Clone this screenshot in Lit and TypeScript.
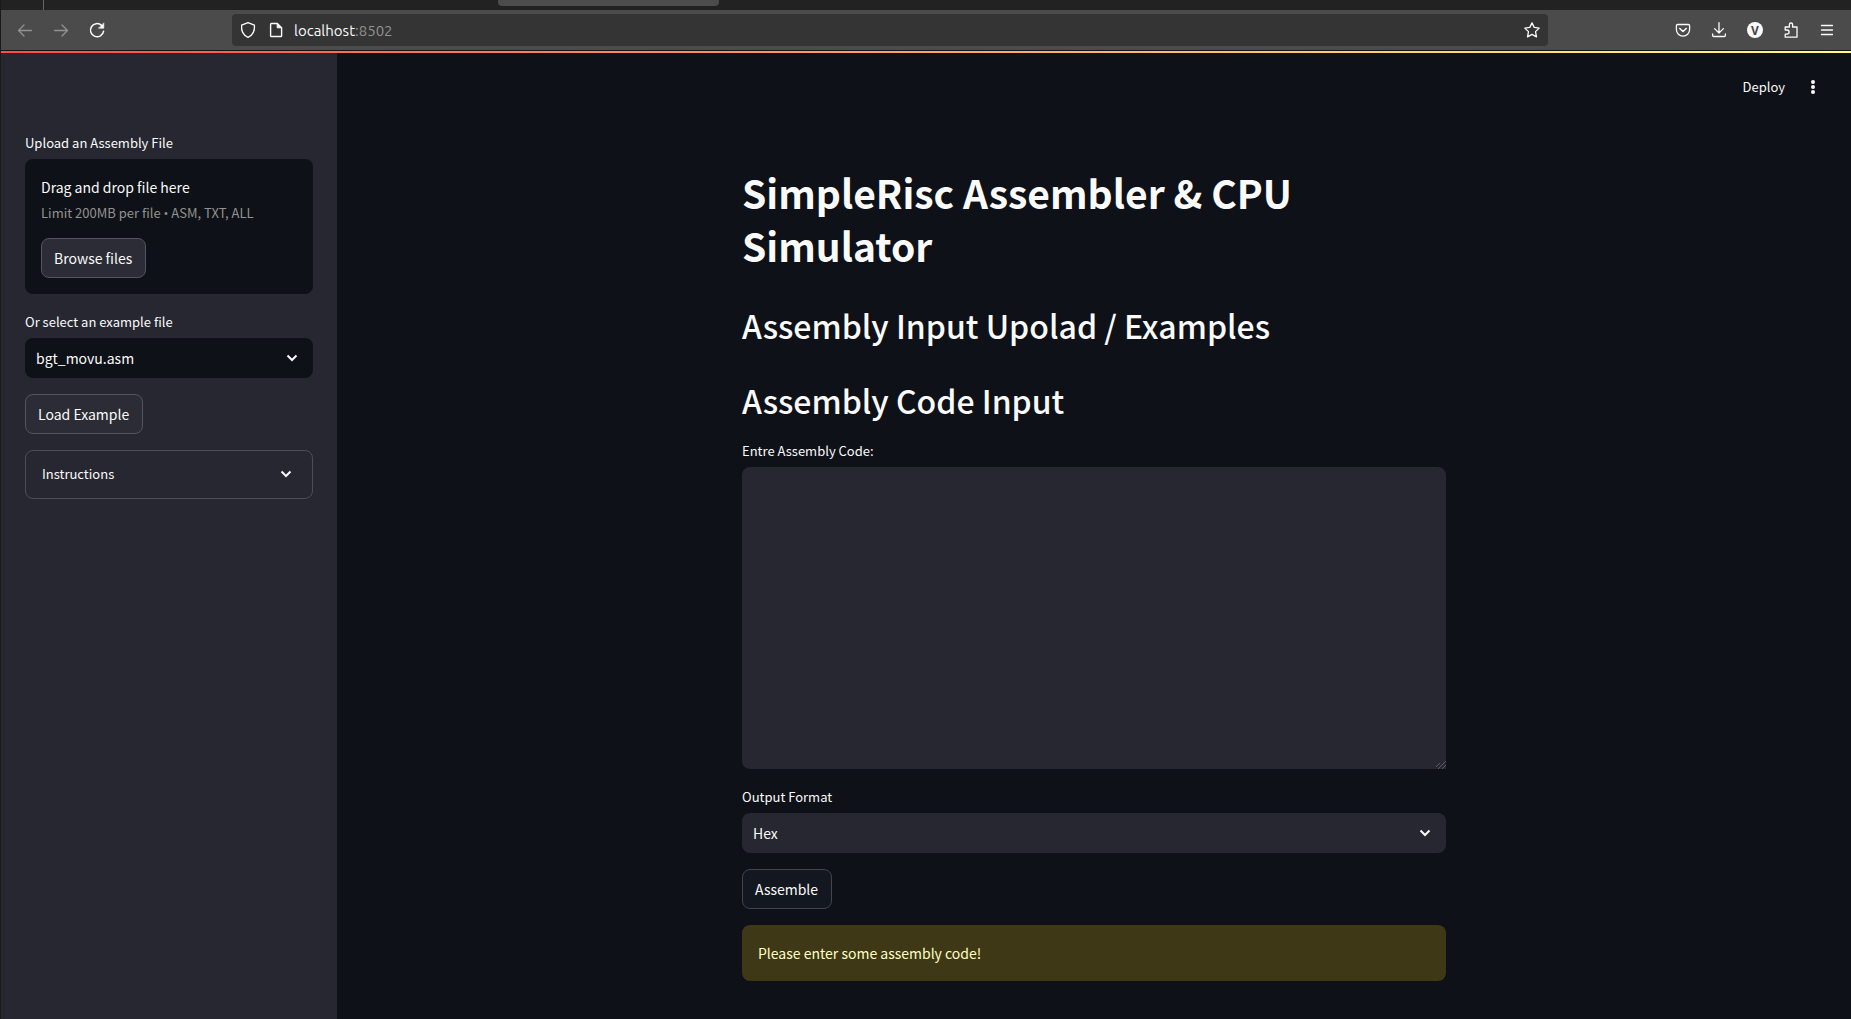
import { LitElement, html, css, svg } from "lit";
import { customElement, property } from "lit/decorators.js";

const chevron = svg`<path d="M1.5 1.5 L6 6 L10.5 1.5" fill="none" stroke="currentColor" stroke-width="2"/>`;

@customElement("browser-bar")
class BrowserBar extends LitElement {
  static styles = css`
    :host { display: block; font-family: "Ubuntu", "Noto Sans", sans-serif; }
    .tabs { height: 10px; background: #222; display: flex; align-items: flex-start; }
    .divider { width: 1px; height: 10px; margin-left: 42px; background: #666; }
    .tab { width: 221px; height: 6px; margin-left: 454px; background: #4c4c4c; border-radius: 0 0 4px 4px; }
    .toolbar {
      display: flex; align-items: center; height: 40px; padding: 0 14px;
      background: #4b4b4b; border-bottom: 1px solid #151515;
    }
    .nav { display: flex; gap: 16px; width: 217px; }
    .tools { display: flex; gap: 16px; margin-left: 125px; }
    button { display: flex; padding: 0; border: 0; background: none; color: #fbfbfe; }
    button:disabled { color: #929292; }
    svg { display: block; width: 20px; height: 20px; fill: none; stroke: currentColor; stroke-width: 1.3; stroke-linecap: round; stroke-linejoin: round; }
    .url {
      display: flex; align-items: center; gap: 8px; flex: 1; height: 32px; padding: 0 6px;
      box-sizing: border-box; background: #343434; border-radius: 4px; color: #fbfbfe;
    }
    .address { flex: 1; padding-top: 2px; font-size: 15px; line-height: 20px; color: #fbfbfe; }
    .port { color: #929292; }
    .badge { fill: #fbfbfe; stroke: none; }
    .badge text { fill: #444; font: bold 12px "Noto Sans", sans-serif; text-anchor: middle; }
  `;

  render() {
    return html`
      <div class="tabs"><span class="divider"></span><span class="tab"></span></div>
      <div class="toolbar">
        <div class="nav">
          <button disabled aria-label="Back"><svg viewBox="0 0 20 20"><path d="M16.5 10.5H3.5M9 5L3.5 10.5L9 16"/></svg></button>
          <button disabled aria-label="Forward"><svg viewBox="0 0 20 20"><path d="M3.5 10.5H16.5M11 5L16.5 10.5L11 16"/></svg></button>
          <button aria-label="Reload"><svg viewBox="0 0 20 20"><path d="M16.6 11.2A6.6 6.6 0 1 1 14.6 5.4" stroke-width="1.5"/><path d="M16.8 3.2V8.2H11.8Z" fill="currentColor" stroke-width=".6"/></svg></button>
        </div>
        <div class="url">
          <button aria-label="Tracking protection"><svg viewBox="0 0 20 20"><path d="M10 2.7L16.4 5.2C16.9 10.7 15 15 10 17.4C5 15 3.1 10.7 3.6 5.2Z"/></svg></button>
          <button aria-label="Site information"><svg viewBox="0 0 20 20"><path d="M5.4 3.5H11.3L15.6 7.8V15.7Q15.6 16.5 14.8 16.5H5.4Q4.6 16.5 4.6 15.7V4.3Q4.6 3.5 5.4 3.5Z" stroke-width="1.4"/><path d="M11.2 3.6V7.8H15.4Z" fill="currentColor" stroke-width="1"/></svg></button>
          <span class="address">localhost<span class="port">:8502</span></span>
          <button aria-label="Bookmark this page"><svg viewBox="0 0 20 20"><path d="M10 2.9L12.2 7.4L17.2 8.1L13.5 11.6L14.5 16.9L10 14.4L5.5 16.9L6.5 11.6L2.8 8.1L7.8 7.4Z"/></svg></button>
        </div>
        <div class="tools">
          <button aria-label="Save to Pocket"><svg viewBox="0 0 20 20"><path d="M4.6 4.5H15.4Q16.6 4.5 16.6 5.7V9.6A6.6 6.6 0 0 1 3.4 9.6V5.7Q3.4 4.5 4.6 4.5Z"/><path d="M6.8 8.5L10 11.5L13.2 8.5" stroke-width="1.6"/></svg></button>
          <button aria-label="Downloads"><svg viewBox="0 0 20 20"><path d="M10 2.6V12.8M5.6 8.6L10 13L14.4 8.6M3.6 13.8V15.3Q3.6 16.5 4.8 16.5H15.2Q16.4 16.5 16.4 15.3V13.8"/></svg></button>
          <button aria-label="Account"><svg class="badge" viewBox="0 0 20 20"><circle cx="10" cy="10" r="8"/><text x="10" y="14.5">V</text></svg></button>
          <button aria-label="Extensions"><svg viewBox="0 0 20 20"><path d="M4.2 9.4V7H8.4V4.6A1.6 1.6 0 0 1 11.6 4.6V7H16V17.2H4.2V14.2H6A1.8 1.8 0 0 0 6 10H4.2Z"/></svg></button>
          <button aria-label="Application menu"><svg viewBox="0 0 20 20"><path d="M4.5 5.5H15.5M4.5 10H15.5M4.5 14.5H15.5"/></svg></button>
        </div>
      </div>`;
  }
}

@customElement("select-field")
class SelectField extends LitElement {
  @property() label = "";
  @property() value = "";

  static styles = css`
    :host { display: flex; flex-direction: column; gap: 4px; color: #fafafa; }
    label { font-size: 13px; line-height: 24px; }
    .box { display: grid; align-items: center; border-radius: 8px; background: var(--field, #262730); }
    select {
      grid-area: 1 / 1; width: 100%; height: 40px; padding: 0 40px 0 11px; border: 0; border-radius: 8px;
      appearance: none; background: none; color: inherit; font: inherit; font-size: 14px;
    }
    svg { grid-area: 1 / 1; justify-self: end; width: 12px; height: 8px; margin-right: 15px; pointer-events: none; }
  `;

  render() {
    return html`
      <label for="field">${this.label}</label>
      <div class="box">
        <select id="field"><option>${this.value}</option></select>
        <svg viewBox="0 0 12 8">${chevron}</svg>
      </div>`;
  }
}

@customElement("app-root")
class AppRoot extends LitElement {
  static styles = css`
    :host {
      display: flex; flex-direction: column; min-height: 100vh; box-sizing: border-box;
      border-left: 1px solid #1a1a1a; background: #0e1117; color: #fafafa;
      font-family: "Noto Sans CJK SC", sans-serif; font-size: 14px; line-height: 24px;
    }
    .rainbow { height: 2px; background: linear-gradient(90deg, #ff4b4b, #fffd80); }
    .body { display: flex; flex: 1; }
    .sidebar {
      display: flex; flex-direction: column; align-items: stretch; gap: 16px;
      width: 336px; box-sizing: border-box; padding: 78px 24px 24px; background: #262730;
    }
    .group { display: flex; flex-direction: column; gap: 4px; }
    .label { font-size: 13px; line-height: 24px; }
    .drop {
      display: flex; flex-direction: column; align-items: flex-start; padding: 16px;
      border-radius: 8px; background: #0e1117;
    }
    .hint { margin-bottom: 11px; font-size: 13px; line-height: 28px; color: #92938f; }
    .bullet { font-family: "Open Sans", sans-serif; }
    button { font: inherit; color: inherit; }
    .btn {
      align-self: flex-start; height: 40px; padding: 0 13px 0 12px; border: 1px solid #53545d;
      border-radius: 8px; background: #2b2c36;
    }
    .assemble { border-color: #41444c; background: #131720; }
    .dark { --field: #0e1117; }
    details { border: 1px solid #4c4d56; border-radius: 8px; }
    summary {
      display: flex; align-items: center; justify-content: space-between; height: 47px;
      box-sizing: border-box; padding: 0 20px 2px 16px; font-size: 13px; list-style: none;
    }
    summary svg { width: 12px; height: 8px; }
    .main { display: flex; flex-direction: column; flex: 1; min-width: 0; }
    .header {
      display: flex; justify-content: flex-end; align-items: center; gap: 20px;
      height: 68px; padding-right: 30px;
    }
    .header button { padding: 0; border: 0; background: none; font-size: 13px; }
    .header svg { display: block; width: 16px; height: 16px; fill: #fafafa; }
    .content {
      display: flex; flex-direction: column; align-items: stretch; gap: 16px;
      width: 100%; max-width: 704px; margin: 0 auto; padding: 45px 0 36px;
    }
    h1, h2 { margin: 0; }
    h1 { padding-bottom: 16px; font-size: 39px; line-height: 53px; font-weight: 700; }
    h2 { padding-bottom: 16px; font-size: 32px; line-height: 43px; font-weight: 500; }
    h2:last-of-type { padding-bottom: 1px; }
    textarea {
      display: block; width: 100%; height: 302px; box-sizing: border-box; padding: 16px; border: 0;
      border-radius: 8px; background: #262730; color: #fafafa; font: inherit; resize: vertical;
    }
    textarea::-webkit-resizer {
      background:
        linear-gradient(135deg, #262730 60%, transparent 60%),
        repeating-linear-gradient(135deg, #5c5c60 0 1px, #262730 1px 3px);
    }
    .alert { padding: 16px; border-radius: 8px; background: #3e3816; color: #ffffc2; }
  `;

  render() {
    return html`
      <browser-bar></browser-bar>
      <div class="rainbow"></div>
      <div class="body">
        <aside class="sidebar">
          <div class="group">
            <span class="label" id="upload-label">Upload an Assembly File</span>
            <section class="drop" aria-labelledby="upload-label">
              <span>Drag and drop file here</span>
              <span class="hint">Limit 200MB per file <span class="bullet">•</span> ASM, TXT, ALL</span>
              <button class="btn">Browse files</button>
            </section>
          </div>
          <select-field class="dark" label="Or select an example file" value="bgt_movu.asm"></select-field>
          <button class="btn">Load Example</button>
          <details>
            <summary>Instructions <svg viewBox="0 0 12 8">${chevron}</svg></summary>
          </details>
        </aside>
        <div class="main">
          <header class="header">
            <button>Deploy</button>
            <button aria-label="Main menu">
              <svg viewBox="0 0 16 16"><circle cx="8" cy="3" r="2"/><circle cx="8" cy="8" r="2"/><circle cx="8" cy="13" r="2"/></svg>
            </button>
          </header>
          <main class="content">
            <h1>SimpleRisc Assembler &amp; CPU Simulator</h1>
            <h2>Assembly Input Upolad / Examples</h2>
            <h2>Assembly Code Input</h2>
            <div class="group">
              <label class="label" for="code">Entre Assembly Code:</label>
              <textarea id="code"></textarea>
            </div>
            <select-field label="Output Format" value="Hex"></select-field>
            <button class="btn assemble">Assemble</button>
            <div class="alert" role="alert">Please enter some assembly code!</div>
          </main>
        </div>
      </div>`;
  }
}
